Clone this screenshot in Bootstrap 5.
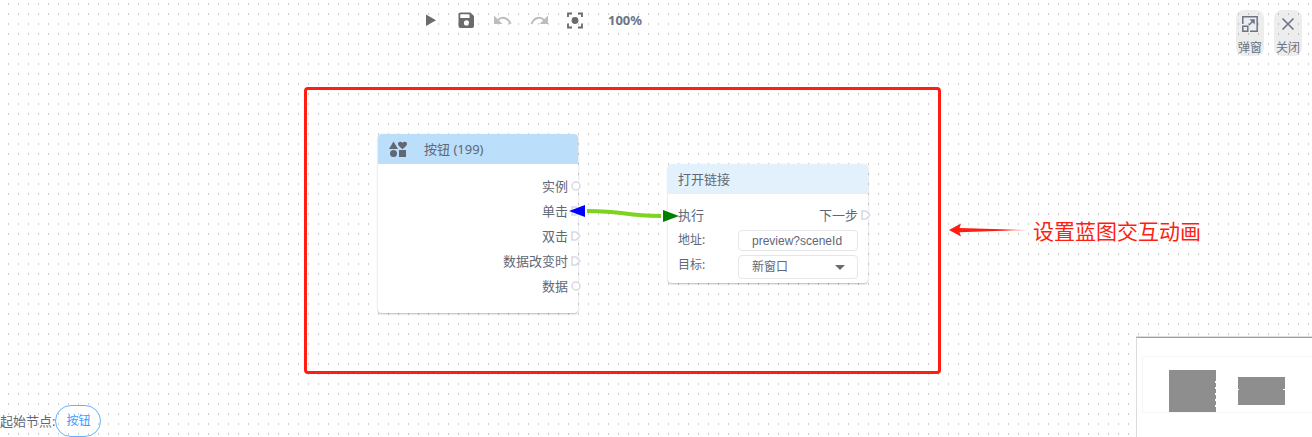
<!DOCTYPE html>
<html lang="zh-CN">
<head>
<meta charset="utf-8">
<meta name="viewport" content="width=device-width, initial-scale=1">
<title>蓝图编辑器</title>
<link href="https://cdn.jsdelivr.net/npm/bootstrap@5.3.0/dist/css/bootstrap.min.css" rel="stylesheet">
<style>
  body { font-family: "Noto Sans", "Noto Sans CJK SC", sans-serif; font-size: 13px; line-height: 20px; color: #606876; }
  /* 10px dot grid */
  .editor {
    background-image:
      linear-gradient(to bottom, #fff 3px, transparent 3px 5px, #fff 5px),
      linear-gradient(to right, #fff 8px, #cecece 8px 9px, #fff 9px);
    background-size: 10px 10px;
  }
  .tools { margin-left: calc(50% - 235px); gap: 16px; height: 40px; }
  .tool { color: #6b6b6b; width: 20px; height: 20px; line-height: 0; }
  .tool:disabled { color: #bdbdbd; border: 0; opacity: 1; }
  .zoom-level { font-size: 13px; font-weight: 700; color: #6b7485; margin-left: 7px; }
  .side-tools { padding: 10px 10px 0 0; gap: 10px; }
  .side-btn { width: 28px; height: 46px; border-radius: 8px; background: rgba(0, 0, 0, .07); color: #6b7485; font-size: 12px; line-height: 18px; }
  .side-btn svg { margin: 5px 0 6px; flex: none; }
  .canvas { pointer-events: none; }
  .node { width: 200px; background: #fff; border-radius: 4px; box-shadow: 0 1px 2px rgba(0, 0, 0, .28); pointer-events: auto; }
  .node-head { height: 30px; border-radius: 4px 4px 0 0; background: #bbdefb; padding: 0 10px; }
  .node-head.pale { background: #e3f1fc; }
  .node-source { left: 378px; top: 134px; }
  .node-source .ports { padding: 9px 0 15px; }
  .node-link { left: 668px; top: 164px; }
  .node-link .params { padding: 8px 10px 4px; }
  .port { height: 25px; gap: 3px; margin-right: -3px; }
  .params .port { margin: 0 -13px 3px 0; }
  .field-label { width: 60px; font-size: 12px; }
  .field-box { height: 21px; width: 120px; padding: 0 13px; font: 12px "Liberation Sans", "Noto Sans CJK SC", sans-serif; color: #606876; border: 1px solid #e4e6ea; border-radius: 4px; min-height: 0; }
  select.field-box { height: 24px; background: #fff url("data:image/svg+xml,%3Csvg xmlns='http://www.w3.org/2000/svg' viewBox='0 0 10 5'%3E%3Cpath fill='%236b6b6b' d='M0 0h10L5 5z'/%3E%3C/svg%3E") no-repeat right 12px center / 10px 5px; }
  .callout-box { left: 304px; top: 87px; width: 637px; height: 287px; border: 3px solid #ff1d12; border-radius: 4px; }
  .callout-note { left: 949px; top: 215px; font-size: 21px; line-height: 32px; color: #ff1d12; gap: 4px; }
  .minimap { width: 176px; height: 100px; background: #fff; border-left: 1px solid #dcdcdc; border-top: 1px solid #3cc8c8; box-shadow: 0 -1px 0 #dcdcdc; }
  .start-nodes { height: 32px; }
  .start-btn { height: 32px; width: 46px; border: 1px solid #66b1ff; color: #409eff; font-size: 12px; }
</style>
</head>
<body>
<div class="editor position-relative d-flex flex-column vh-100 overflow-hidden">

  <header class="d-flex justify-content-between align-items-start">
    <div class="tools d-flex align-items-center">
      <button class="tool btn p-0 border-0" aria-label="运行"><svg width="20" height="20" viewBox="0 0 20 20" fill="currentColor"><path d="M5 4.500v11.500l10-5.700z"/></svg></button>
      <button class="tool btn p-0 border-0" aria-label="保存"><svg width="20" height="20" viewBox="0 0 20 20" fill="currentColor" fill-rule="evenodd"><path d="M3.500 2.500h10L17 6v10q0 2-2 2H3.500q-2 0-2-2V4.500q0-2 2-2zM3.300 4.300V8h9.200V4.300zM9.500 10.300a2.600 2.600 0 100 5.200 2.600 2.600 0 000-5.200z"/></svg></button>
      <button class="tool btn p-0 border-0" aria-label="撤销" disabled><svg width="20" height="20" viewBox="0 0 20 20"><path d="M1 5.500v8.500h8.500z" fill="currentColor"/><path d="M4.500 10.500C8.500 6 15 7 17.500 14" fill="none" stroke="currentColor" stroke-width="2"/></svg></button>
      <button class="tool btn p-0 border-0" aria-label="重做" disabled><svg width="20" height="20" viewBox="0 0 20 20"><path d="M19 5.500v8.500h-8.500z" fill="currentColor"/><path d="M15.500 10.500C11.500 6 5 7 2.500 14" fill="none" stroke="currentColor" stroke-width="2"/></svg></button>
      <button class="tool btn p-0 border-0" aria-label="居中"><svg width="20" height="20" viewBox="0 0 20 20"><path d="M3 7V3.500h4M13 3.500h4V7M17 13.500v4h-4M7 17.500H3v-4" fill="none" stroke="currentColor" stroke-width="1.800"/><circle cx="10" cy="10.500" r="3.400" fill="currentColor"/></svg></button>
      <span class="zoom-level">100%</span>
    </div>
    <div class="side-tools d-flex">
      <button class="side-btn btn p-0 border-0 d-flex flex-column align-items-center text-nowrap"><svg width="18" height="18" viewBox="0 0 18 18" fill="none" stroke="currentColor" stroke-width="1.500"><path d="M1.800 9V1.800h14.400v14.400H9M1.800 11.300h5v5h-5zM8 10l5-5"/><path d="M8.500 4.300h5.200v5.200z" fill="currentColor" stroke="none"/></svg><span>弹窗</span></button>
      <button class="side-btn btn p-0 border-0 d-flex flex-column align-items-center text-nowrap"><svg width="18" height="18" viewBox="0 0 18 18" fill="none" stroke="currentColor" stroke-width="1.600"><path d="M3.500 3.500l11 11M14.500 3.500l-11 11"/></svg><span>关闭</span></button>
    </div>
  </header>

  <main class="canvas position-absolute top-0 start-0 w-100 h-100">
    <section class="node node-source position-absolute">
      <div class="node-head d-flex align-items-center">
        <svg class="me-3" width="20" height="20" viewBox="0 0 20 20" fill="#606876"><path d="M5.500 2.500L10 10H1zM14.500 10.200C10.500 7 10 6 10 4.800c0-2.300 3-3 4.500-1 1.500-2 4.500-1.300 4.500 1 0 1.200-.5 2.200-4.500 5.400zM11 11h7v7h-7z"/><circle cx="5.500" cy="14.500" r="3.500"/></svg>
        <span>按钮 (199)</span>
      </div>
      <div class="ports">
        <div class="port d-flex align-items-center justify-content-end"><span>实例</span><svg width="10" height="10" viewBox="0 0 10 10"><circle cx="5" cy="5" r="4" fill="#fff" stroke="#d5d9e6" stroke-width="1.500"/></svg></div>
        <div class="port d-flex align-items-center justify-content-end"><span>单击</span><svg width="10" height="10" viewBox="0 0 10 10"><path d="M1 1h4l4 4-4 4H1z" fill="#fff" stroke="#d5d9e6" stroke-width="1.500"/></svg></div>
        <div class="port d-flex align-items-center justify-content-end"><span>双击</span><svg width="10" height="10" viewBox="0 0 10 10"><path d="M1 1h4l4 4-4 4H1z" fill="#fff" stroke="#d5d9e6" stroke-width="1.500"/></svg></div>
        <div class="port d-flex align-items-center justify-content-end"><span>数据改变时</span><svg width="10" height="10" viewBox="0 0 10 10"><path d="M1 1h4l4 4-4 4H1z" fill="#fff" stroke="#d5d9e6" stroke-width="1.500"/></svg></div>
        <div class="port d-flex align-items-center justify-content-end"><span>数据</span><svg width="10" height="10" viewBox="0 0 10 10"><circle cx="5" cy="5" r="4" fill="#fff" stroke="#d5d9e6" stroke-width="1.500"/></svg></div>
      </div>
    </section>

    <section class="node node-link position-absolute">
      <div class="node-head pale d-flex align-items-center">打开链接</div>
      <div class="params">
        <div class="port d-flex align-items-center"><span class="me-auto">执行</span><span>下一步</span><svg width="10" height="10" viewBox="0 0 10 10"><path d="M1 1h4l4 4-4 4H1z" fill="#fff" stroke="#d5d9e6" stroke-width="1.500"/></svg></div>
        <div class="d-flex mb-1">
          <label class="field-label" for="url">地址:</label>
          <input class="field-box" id="url" type="text" value="preview?sceneId">
        </div>
        <div class="d-flex">
          <label class="field-label" for="target">目标:</label>
          <select class="field-box form-select" id="target"><option>新窗口</option></select>
        </div>
      </div>
    </section>

    <svg class="position-absolute top-0 start-0 w-100 h-100">
      <path d="M587 211C630 211 620 216 661 216" fill="none" stroke="#7ed321" stroke-width="4"/>
      <path d="M569 211l16-6v12z" fill="#00f"/>
      <path d="M679 216l-16-6v12z" fill="#008000"/>
    </svg>

    <div class="callout-box position-absolute"></div>
    <div class="callout-note position-absolute d-flex align-items-center text-nowrap">
      <svg width="80" height="16" viewBox="0 0 80 16"><defs><linearGradient id="fade"><stop offset=".7" stop-color="#ff1d12"/><stop offset="1" stop-color="#ff1d12" stop-opacity=".3"/></linearGradient></defs><path d="M0 7L12 .5 10.500 5 80 7 10.500 9.200 12 13.500z" fill="url(#fade)"/></svg>
      <span>设置蓝图交互动画</span>
    </div>
  </main>

  <footer class="d-flex align-items-end justify-content-between mt-auto">
    <div class="start-nodes d-flex align-items-center">
      <span>起始节点:</span>
      <button class="start-btn btn p-0 rounded-pill">按钮</button>
    </div>
    <div class="minimap">
      <svg class="d-block" width="175" height="99" viewBox="0 0 175 99">
        <path d="M175 18.500H5.500v56H175" fill="none" stroke="#f5f5f5"/>
        <path d="M32 32h47v42H32zM101 39h47v28h-47z" fill="#8e8e8e"/>
        <path d="M78 43h2v2h-2zM78 49h2v2h-2zM78 55h2v2h-2zM78 61h2v2h-2zM78 67h2v2h-2zM101 51h1v1h-1zM146 51h2v1h-2z" fill="#fff"/>
      </svg>
    </div>
  </footer>
</div>
<script src="https://cdn.jsdelivr.net/npm/bootstrap@5.3.0/dist/js/bootstrap.bundle.min.js"></script>
</body>
</html>
